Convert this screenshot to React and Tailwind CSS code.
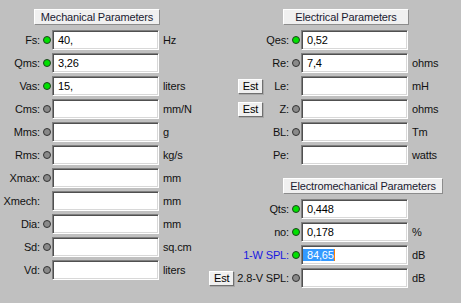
import React from "react";

const Led = ({ state }) => {
  if (state === "g")
    return <div className="w-[8px] h-[8px] rounded-full bg-[#00e000] border border-[#1f3f1f]" />;
  if (state === "x")
    return <div className="w-[8px] h-[8px] rounded-full bg-[#8a8a8a] border border-[#333333]" />;
  return <div className="w-[8px] h-[8px]" />;
};

const Field = ({ value, selected }) => (
  <div className="w-[107px] h-[20px] bg-white border border-t-[#808080] border-l-[#808080] border-b-white border-r-white shadow-[inset_1px_1px_0_#505050,inset_-1px_-1px_0_#d8d8d8] flex items-center pl-[5px] text-black">
    {selected ? (
      <span className="flex items-center">
        <span className="bg-[#3399ff] text-white -ml-[4px] pl-[4px] h-[12px] flex items-center leading-none">{value}</span>
        <span className="w-[1px] h-[12px] bg-[#ff8000]" />
      </span>
    ) : (
      <span className="leading-none">{value}</span>
    )}
  </div>
);

const Header = ({ children, w, ml }) => (
  <div
    className={`${w} ${ml} h-[16px] bg-[#f0f0f0] border border-t-white border-l-white border-b-[#8c8c8c] border-r-[#8c8c8c] flex items-center justify-center text-[#1a1a30] leading-none`}
  >
    {children}
  </div>
);

const Est = ({ cls = "" }) => (
  <div className={`w-[25px] h-[15px] bg-[#f0f0f0] border border-t-white border-l-white border-b-[#707070] border-r-[#707070] shadow-[1px_1px_0_#a8a8a8] flex items-center justify-center text-black leading-none ${cls}`}>
    Est
  </div>
);

const leftRows = [
  ["Fs:", "g", "40,", "Hz"],
  ["Qms:", "g", "3,26", ""],
  ["Vas:", "g", "15,", "liters"],
  ["Cms:", "x", "", "mm/N"],
  ["Mms:", "x", "", "g"],
  ["Rms:", "x", "", "kg/s"],
  ["Xmax:", "x", "", "mm"],
  ["Xmech:", "", "", "mm"],
  ["Dia:", "x", "", "mm"],
  ["Sd:", "x", "", "sq.cm"],
  ["Vd:", "x", "", "liters"],
];

const LeftRow = ({ r }) => (
  <div className="flex items-center h-[20px]">
    <div className="w-[40px] text-right text-[#111] leading-none">{r[0]}</div>
    <div className="w-[3px]" />
    <Led state={r[1]} />
    <div className="w-[1px]" />
    <Field value={r[2]} />
    <div className="ml-[4px] text-[#111] leading-none">{r[3]}</div>
  </div>
);

const RightRow = ({ label, led, value, unit, est, estInline, blue, selected }) => (
  <div className="flex items-center h-[20px]">
    <div className="w-[89px] flex items-center justify-end">
      {est && <Est cls="ml-[38px] mr-auto" />}
      {estInline && <Est cls="mr-[3px]" />}
      <span className={`leading-none ${blue ? "text-[#1818e0]" : "text-[#111]"}`}>{label}</span>
    </div>
    <div className="w-[3px]" />
    <Led state={led} />
    <div className="w-[1px]" />
    <Field value={value} selected={selected} />
    <div className="ml-[4px] text-[#111] leading-none">{unit}</div>
  </div>
);

export default function App() {
  return (
    <div className="w-[461px] h-[303px] bg-[#c0c0c0] flex font-['Liberation_Sans',Arial,sans-serif] text-[11px] tracking-[-0.15px] overflow-hidden">
      <div className="w-[200px] pt-[9px] flex flex-col">
        <Header w="w-[126px]" ml="ml-[34px]">Mechanical Parameters</Header>
        <div className="mt-[5px] flex flex-col gap-[3px]">
          {leftRows.map((r) => (
            <LeftRow key={r[0]} r={r} />
          ))}
        </div>
      </div>
      <div className="flex-1 pt-[9px] flex flex-col">
        <Header w="w-[126px]" ml="ml-[83px]">Electrical Parameters</Header>
        <div className="mt-[5px] flex flex-col gap-[3px]">
          <RightRow label="Qes:" led="g" value="0,52" unit="" />
          <RightRow label="Re:" led="x" value="7,4" unit="ohms" />
          <RightRow label="Le:" led="" value="" unit="mH" est />
          <RightRow label="Z:" led="x" value="" unit="ohms" est />
          <RightRow label="BL:" led="x" value="" unit="Tm" />
          <RightRow label="Pe:" led="" value="" unit="watts" />
        </div>
        <div className="mt-[13px]">
          <Header w="w-[160px]" ml="ml-[83px]">Electromechanical Parameters</Header>
        </div>
        <div className="mt-[5px] flex flex-col gap-[3px]">
          <RightRow label="Qts:" led="g" value="0,448" unit="" />
          <RightRow label="no:" led="g" value="0,178" unit="%" />
          <RightRow label="1-W SPL:" led="g" value="84,65" unit="dB" blue selected />
          <RightRow label="2.8-V SPL:" led="x" value="" unit="dB" estInline />
        </div>
      </div>
    </div>
  );
}
